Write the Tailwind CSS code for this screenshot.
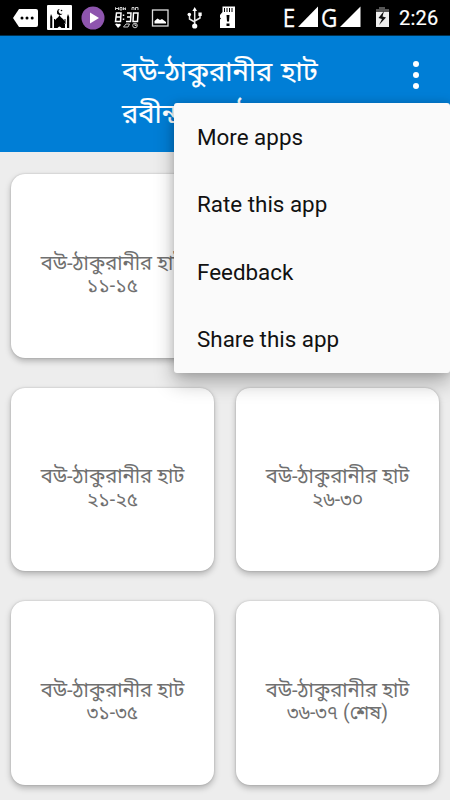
<!DOCTYPE html>
<html lang="bn">
<head>
<meta charset="utf-8">
<meta name="viewport" content="width=device-width, initial-scale=1">
<title>বউ-ঠাকুরানীর হাট</title>
<script src="https://cdn.jsdelivr.net/npm/@tailwindcss/browser@4"></script>
</head>
<body class="relative flex h-[800px] w-[450px] flex-col overflow-hidden bg-[#ededed] font-[Roboto,'Noto_Sans_Bengali','Noto_Sans',sans-serif]">
  <!-- Status bar -->
  <div class="flex h-9 shrink-0 items-center bg-black border-b border-[#00314f] text-white">
    <svg class="h-9 w-[280px] shrink-0" viewBox="0 0 280 36" fill="#fff">
      <path d="M19 9H36Q38 9 38 11V25Q38 27 36 27H19L13 18Z"/>
      <g fill="#000"><circle cx="22" cy="18" r="1.5"/><circle cx="27" cy="18" r="1.5"/><circle cx="32.200" cy="18" r="1.5"/></g>
      <rect x="47" y="5" width="25" height="25" rx="1"/>
      <g fill="#000">
        <path d="M59.500 15Q60 17 63 19Q65.500 21.500 64 24H55Q53.500 21.500 56 19Q59 17 59.500 15ZM54 24H65V28H61.500Q59.500 25 57.500 28H54ZM51 14L52.300 17V28H50.200V17ZM68 14L69.200 17V28H67V17ZM54 19H55V24H54ZM64.500 19H65.500V24H64.500Z"/>
        <path d="M60 9A3 3 0 1 0 62.500 13.500A2.400 2.400 0 1 1 60 9Z"/><circle cx="61.500" cy="10.500" r=".8"/>
      </g>
      <circle cx="93" cy="18" r="11.500" fill="#8e55ae"/><path d="M90 12.500L99 18L90 23.500Z"/>
      <g fill="none" stroke="#fff" stroke-width="1.500">
        <path d="M116.500 13H121L120.500 21.500H115.500ZM116 17H121M127 13H131L130.500 21.500H126M127 17H130.500M133.500 13H138L137.500 21.500H133Z"/>
        <path d="M123.500 14.500V16M123.500 18.500V20"/>
        <g stroke-width="1" stroke="#ccc"><path d="M115.500 10V7.500L117 9L118.500 7.500V10M120 7.500H122V10H120ZM123.500 10V7.500L125.500 10V7.500M132 10V7.500H134V10M135.500 10V7.500H138V10"/><path d="M123.500 27L126 24H129.500L128 27Z"/><circle cx="135" cy="25.500" r="2.300"/><path d="M135 24V25.500H136.500"/></g>
      </g>
      <path d="M115 24Q117 23 118 24Q120 23 121 25L118 28Z"/>
      <rect x="152.500" y="10" width="15.500" height="16" fill="none" stroke="#ddd" stroke-width="1.300"/>
      <path d="M154.500 23.500V21L157.500 18.500L160 20L162 19L166 22V23.500Z"/>
      <g fill="none" stroke="#e8e8e8" stroke-width="1.500"><path d="M194.700 9V26M194.700 22L189.500 19V15M194.700 21L200 18V14"/></g>
      <path d="M194.700 7L197 11H192.400Z"/><circle cx="189.300" cy="14.500" r="1.800"/><path d="M198.400 12.500H201.700V16H198.400Z"/><circle cx="194.700" cy="26" r="2.600"/>
      <path d="M222.500 6.500H235V28H220V19.500L221 18.500L220 17.500V15L222.500 12Z"/>
      <g fill="#000"><path d="M224 8H225V12H224ZM226.500 8H227.500V12H226.500ZM229 8H230V12H229ZM231.500 8H232.500V12H231.500ZM226.500 15H229.500L229 21.500H227ZM226.500 23.500H229.500V26H226.500Z"/></g>
    </svg>
    <span class="w-[18px] origin-left -translate-y-px scale-x-[.9] pl-[3px] text-[25px] leading-9 font-['Open_Sans'] [-webkit-text-stroke:0.300px_white]">E</span>
    <svg class="h-9 w-[23px] shrink-0" viewBox="0 0 23 36"><path d="M20 6.500V27H0Z" fill="#fff"/></svg>
    <span class="w-[19px] origin-left -translate-y-px scale-x-[.9] text-[25px] leading-9 font-['Open_Sans'] [-webkit-text-stroke:0.300px_white]">G</span>
    <svg class="h-9 w-[60px] shrink-0" viewBox="340 0 60 36"><path d="M360.500 6.500V27H340Z" fill="#fff"/><path d="M379 7H385V9H389V13H376V9H379Z" fill="#555"/><path d="M376 12H389V27H376Z" fill="#eee"/><path d="M384 11L378.500 18L382 19L379 25L386 17.500L382.500 16.500Z" fill="#111"/></svg>
    <span class="w-[50px] -ml-px text-[20px] font-normal leading-9 tracking-[.2px] [-webkit-text-stroke:0.200px_white]">2:26</span>
  </div>

  <!-- App bar -->
  <header class="flex h-[116px] shrink-0 bg-[#007ed6] pl-[122px] text-white">
    <h1 class="w-[278px] whitespace-nowrap pt-[15px] text-[27.200px] font-normal leading-[42px] [word-spacing:2px] [-webkit-text-stroke:0.200px_white]">বউ-ঠাকুরানীর হাট<br>রবীন্দ্রনাথ ঠাকুর</h1>
    <button aria-label="More options" class="flex h-[78px] w-8 flex-col items-center justify-center gap-[5px]">
      <span class="size-[6px] rounded-full bg-white"></span><span class="size-[6px] rounded-full bg-white"></span><span class="size-[6px] rounded-full bg-white"></span>
    </button>
  </header>

  <!-- Chapter cards -->
  <main class="grid grid-cols-2 gap-x-[22px] gap-y-[30px] px-[11px] pt-[22px] text-center text-[20.200px] leading-[22.500px] text-[#707070]">
    <a class="flex h-[183.500px] items-center justify-center whitespace-nowrap rounded-[14px] bg-white pt-[18px] shadow-[0_3px_6px_rgba(0,0,0,0.26),0_0_2px_rgba(0,0,0,0.2)]"><span>বউ-ঠাকুরানীর হাট<br><span class="text-[19.400px]">১১-১৫</span></span></a>
    <a class="h-[183.500px] rounded-[14px] bg-white shadow-[0_3px_6px_rgba(0,0,0,0.26),0_0_2px_rgba(0,0,0,0.2)]"></a>
    <a class="flex h-[183.500px] items-center justify-center whitespace-nowrap rounded-[14px] bg-white pt-[18px] shadow-[0_3px_6px_rgba(0,0,0,0.26),0_0_2px_rgba(0,0,0,0.2)]"><span>বউ-ঠাকুরানীর হাট<br><span class="text-[19.400px]">২১-২৫</span></span></a>
    <a class="flex h-[183.500px] items-center justify-center whitespace-nowrap rounded-[14px] bg-white pt-[18px] shadow-[0_3px_6px_rgba(0,0,0,0.26),0_0_2px_rgba(0,0,0,0.2)]"><span>বউ-ঠাকুরানীর হাট<br><span class="text-[19.400px]">২৬-৩০</span></span></a>
    <a class="flex h-[183.500px] items-center justify-center whitespace-nowrap rounded-[14px] bg-white pt-[18px] shadow-[0_3px_6px_rgba(0,0,0,0.26),0_0_2px_rgba(0,0,0,0.2)]"><span>বউ-ঠাকুরানীর হাট<br><span class="text-[19.400px]">৩১-৩৫</span></span></a>
    <a class="flex h-[183.500px] items-center justify-center whitespace-nowrap rounded-[14px] bg-white pt-[18px] shadow-[0_3px_6px_rgba(0,0,0,0.26),0_0_2px_rgba(0,0,0,0.2)]"><span>বউ-ঠাকুরানীর হাট<br><span class="text-[19.400px]">৩৬-৩৭ (শেষ)</span></span></a>
  </main>

  <!-- Overflow menu -->
  <nav class="absolute left-[174px] top-[103px] flex h-[270px] w-[276px] flex-col rounded-[3px] bg-[#fafafa] pl-[23px] text-[22.400px] text-[#111] shadow-[0_10px_20px_rgba(0,0,0,0.28),0_0_8px_rgba(0,0,0,0.15)]">
    <a class="flex h-[67.500px] items-center pt-[2px]">More apps</a>
    <a class="flex h-[67.500px] items-center pt-[2px]">Rate this app</a>
    <a class="flex h-[67.500px] items-center pt-[2px]">Feedback</a>
    <a class="flex h-[67.500px] items-center pt-[2px]">Share this app</a>
  </nav>
</body>
</html>
